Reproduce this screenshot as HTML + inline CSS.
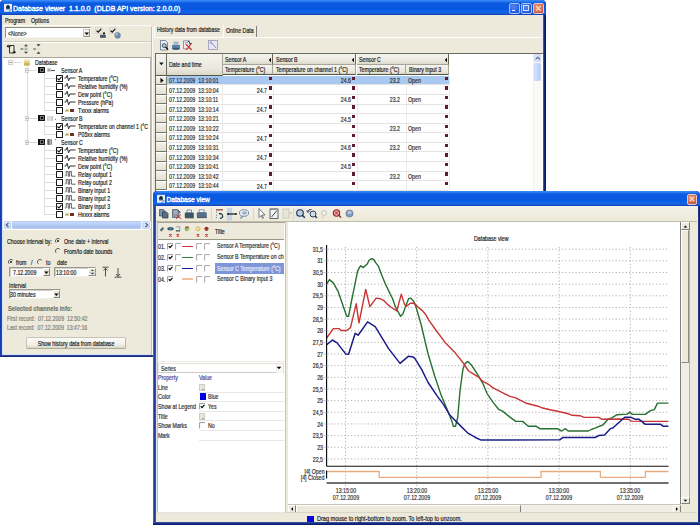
<!DOCTYPE html><html><head><meta charset="utf-8"><style>
html,body{margin:0;padding:0;}
body{width:700px;height:525px;overflow:hidden;position:relative;background:#fff;font-family:"Liberation Sans",sans-serif;}
div,span,svg{position:absolute;box-sizing:border-box;}
.t{font-size:7.2px;letter-spacing:0;line-height:8px;white-space:pre;color:#000;transform:scaleX(0.73);-webkit-text-stroke:0.2px currentColor;}
.tb{font-size:7px;font-weight:normal;letter-spacing:0;-webkit-text-stroke:0.35px #fff;line-height:8px;white-space:pre;color:#fff;}
</style></head><body>

<div style="left:0px;top:0px;width:546px;height:357px;background:linear-gradient(90deg,#0A38B8,#2848B0 1.5px,#2C4096 2.5px);border-radius:4px 4px 0 0;"></div>
<div style="left:0px;top:0px;width:546px;height:15px;background:linear-gradient(#3A8CFA 0,#2A78F0 1.5px,#0A5AE2 3px,#0858E0 9px,#1066F0 12px,#1A5CD0 13.5px,#0C3CB8 15px);border-radius:5px 5px 0 0;"></div>
<div style="left:542.2px;top:15px;width:1.1px;height:340px;background:#EEEAF8;"></div>
<div style="left:543.2px;top:15px;width:2.8px;height:342px;background:linear-gradient(90deg,#6070B0,#0C2878 45%,#0A1E62);"></div>
<div style="left:0px;top:355.2px;width:546px;height:2.0px;background:linear-gradient(#3A4CA0,#0C2272);"></div>
<div style="left:2px;top:15px;width:541px;height:340px;background:#EEEADB;border-left:1px solid #D8E0F6;border-bottom:1px solid #D8E0F6;border-right:1px solid #EEEAF8;"></div>
<svg style="left:2.5px;top:3px" width="10" height="10" viewBox="0 0 10 10"><rect x="1" y="0.8" width="8" height="8" fill="#E4EEFA"/><path d="M3 5.5 Q3 2 5 2 Q7 2 7 5.5 Z" fill="#1A2A3A"/><rect x="3.2" y="5.2" width="3.6" height="1.2" fill="#304050"/><path d="M6 8.8 L8.5 6" stroke="#3050A0" stroke-width="0.8"/></svg>
<span class="tb" style="left:13px;top:5.0px;transform-origin:0 50%;">Database viewer  1.1.0.0  (DLDB API version: 2.0.0.0)</span>
<div style="left:509px;top:3px;width:10.5px;height:10.8px;background:radial-gradient(circle at 40% 35%,#5A88F0,#2A5CD8 70%,#2050C8);border:0.8px solid #A8C0F4;border-radius:2px;"></div>
<div style="left:511.6px;top:9.6px;width:3.2px;height:1.4px;background:#E8F0FF;"></div>
<div style="left:521px;top:3px;width:10.5px;height:10.8px;background:radial-gradient(circle at 40% 35%,#5A88F0,#2A5CD8 70%,#2050C8);border:0.8px solid #A8C0F4;border-radius:2px;"></div>
<div style="left:523.3px;top:5.2px;width:5.9px;height:5.4px;border:0.8px solid #D8E4FF;border-top-width:1.6px;"></div>
<div style="left:533px;top:3px;width:10.5px;height:10.8px;background:radial-gradient(circle at 40% 35%,#E89880,#D06048 70%,#B84830);border:0.8px solid #E8C8C8;border-radius:2px;"></div>
<svg style="left:533px;top:3px" width="11" height="11" viewBox="0 0 11 11"><path d="M3 3 L7.8 7.8 M7.8 3 L3 7.8" stroke="#F8D0B8" stroke-width="1.5"/></svg>
<span class="t" style="left:5px;top:17.0px;transform-origin:0 50%;color:#202020;">Program</span>
<span class="t" style="left:31px;top:17.0px;transform-origin:0 50%;color:#202020;">Options</span>
<div style="left:2.5px;top:24.6px;width:148.1px;height:0.8px;background:#C8C4B4;"></div>
<div style="left:2.5px;top:25.4px;width:148.1px;height:0.8px;background:#FBFBF8;"></div>
<div style="left:5px;top:27.4px;width:86.4px;height:11.0px;background:#fff;border:1px solid #F4F4F0;border-top-color:#8C8C84;border-left-color:#8C8C84;"></div>
<span class="t" style="left:8px;top:29.6px;transform-origin:0 50%;color:#303030;">&lt;None&gt;</span>
<div style="left:82.5px;top:28.6px;width:7.9px;height:8.6px;background:linear-gradient(#FAFAF8,#E8E6DE);border:0.6px solid #C8C4B8;border-right-color:#909088;border-bottom-color:#909088;"></div>
<svg style="left:83px;top:30px" width="8" height="7" viewBox="0 0 8 7"><path d="M1.5 2.5 L6 2.5 L3.75 5 Z" fill="#000"/></svg>
<svg style="left:92px;top:25px" width="34" height="17" viewBox="0 0 34 17"><rect x="3.5" y="2.5" width="6.5" height="6" fill="#E8E6DE" stroke="#CCC8BC" stroke-width="0.5"/><path d="M4.6 5.6 L6.2 7.2 L9.2 3.8" stroke="#111" stroke-width="1.2" fill="none"/><circle cx="12" cy="8.4" r="1.1" fill="#111"/><rect x="8" y="9.8" width="5.8" height="3" fill="#4A5468"/><rect x="17.5" y="2.5" width="6.5" height="6" fill="#E8E6DE" stroke="#CCC8BC" stroke-width="0.5"/><path d="M18.6 5.6 L20.2 7.2 L23.2 3.8" stroke="#111" stroke-width="1.2" fill="none"/><circle cx="25.6" cy="10.4" r="3.1" fill="#6A88A8"/><circle cx="24.8" cy="9.4" r="1.2" fill="#A8C0D8"/></svg>
<div style="left:3px;top:41.2px;width:147.5px;height:0.8px;background:#D0CCBC;"></div>
<div style="left:3px;top:42px;width:147.5px;height:0.7px;background:#FAFAF6;"></div>
<svg style="left:6px;top:43px" width="40" height="13" viewBox="0 0 40 13"><path d="M3.5 2.5 h4.5 v7.5 h-4.5 z" stroke="#303030" stroke-width="1" fill="none"/><path d="M0.3 3.2 L2.6 1.6 V4.8 Z M10.2 9.2 L7.9 7.6 V10.8 Z" fill="#202020"/><path d="M2 3.2 h3 M6.5 9.2 h2" stroke="#202020" stroke-width="0.9"/><path d="M14.5 6 h2.8" stroke="#404040" stroke-width="1"/><circle cx="20" cy="6" r="1.8" fill="#A8C0B0"/><path d="M18 3.2 L20 1.2 L22 3.2 Z M18 8.8 L20 10.8 L22 8.8 Z" fill="#304040"/><path d="M27.3 6 h2.6" stroke="#404040" stroke-width="1"/><path d="M30.5 1.3 L32.5 3.5 L34.5 1.3 Z M30.5 10.7 L32.5 8.5 L34.5 10.7 Z" fill="#304040"/><circle cx="32.5" cy="6" r="1.2" fill="#D8E0D8"/></svg>
<div style="left:3px;top:56.6px;width:147.8px;height:173.8px;background:#fff;border-top:1px solid #A8A498;border-right:1.2px solid #B8B4A8;"></div>
<div style="left:26.5px;top:66px;width:1.0px;height:76.5px;border-left:1px solid #DCDCDC;"></div>
<div style="left:44.3px;top:74px;width:1.0px;height:36.5px;border-left:1px solid #DCDCDC;"></div>
<div style="left:44.3px;top:122px;width:1.0px;height:12.5px;border-left:1px solid #DCDCDC;"></div>
<div style="left:44.3px;top:146px;width:1.0px;height:68.5px;border-left:1px solid #DCDCDC;"></div>
<div style="left:7.8px;top:60.1px;width:4.8px;height:4.8px;border:0.8px solid #D0D0D0;background:#FAFAFA;"></div>
<div style="left:9px;top:62.2px;width:2.5px;height:0.8px;background:#A8A8A8;"></div>
<div style="left:12.6px;top:62.4px;width:9.4px;height:1.0px;border-top:1px solid #DCDCDC;"></div>
<svg style="left:22.5px;top:58.4px" width="8" height="9" viewBox="0 0 8 9"><rect x="1" y="2" width="5.8" height="5.5" rx="1" fill="#E4D080"/><ellipse cx="3.9" cy="2.2" rx="2.9" ry="1.1" fill="#F4ECC0"/><rect x="1" y="5.2" width="5.8" height="2.3" fill="#C8B060"/></svg>
<span class="t" style="left:35px;top:59.0px;transform-origin:0 50%;color:#202020;">Database</span>
<div style="left:24.7px;top:68.1px;width:4.5px;height:4.8px;border:0.8px solid #D0D0D0;background:#FAFAFA;"></div>
<div style="left:25.8px;top:70.2px;width:2.4px;height:0.8px;background:#A8A8A8;"></div>
<div style="left:29.2px;top:70.4px;width:8.3px;height:1.0px;border-top:1px solid #DCDCDC;"></div>
<div style="left:38.3px;top:67.1px;width:6.6px;height:6.4px;background:#141414;"></div>
<div style="left:39.5px;top:68.3px;width:4.2px;height:4.0px;background:#101010;border:0.7px solid #707070;"></div>
<div style="left:47.3px;top:67.9px;width:3.5px;height:4.5px;background:#A0A0A0;border:0.7px solid #D0D0D0;"></div>
<div style="left:51px;top:70.2px;width:4px;height:0.9px;background:#505050;"></div>
<span class="t" style="left:60.8px;top:67.0px;transform-origin:0 50%;color:#202020;">Sensor A</span>
<div style="left:45.3px;top:78.4px;width:10.7px;height:1.0px;border-top:1px solid #DCDCDC;"></div>
<div style="left:56px;top:75.3px;width:6.6px;height:6.4px;background:#fff;border:1.3px solid #1A1A1A;border-radius:0.6px;"></div>
<svg style="left:56.1px;top:75.4px" width="7" height="7" viewBox="0 0 7 7"><path d="M1.5 3.5 L3 5 L5.5 1.8" stroke="#111" stroke-width="1.1" fill="none"/></svg>
<svg style="left:63.5px;top:74.4px" width="13" height="8" viewBox="0 0 13 8"><path d="M0.5 4 L2 4 L3.2 1.3 L4.6 6.8 L5.8 4 L11.5 4" stroke="#1A1A1A" stroke-width="0.9" fill="none"/></svg>
<span class="t" style="left:78px;top:75.0px;transform-origin:0 50%;color:#202020;">Temperature (°C)</span>
<div style="left:45.3px;top:86.4px;width:10.7px;height:1.0px;border-top:1px solid #DCDCDC;"></div>
<div style="left:56px;top:83.3px;width:6.6px;height:6.4px;background:#fff;border:1.3px solid #1A1A1A;border-radius:0.6px;"></div>
<svg style="left:63.5px;top:82.4px" width="13" height="8" viewBox="0 0 13 8"><path d="M0.5 4 L2 4 L3.2 1.3 L4.6 6.8 L5.8 4 L11.5 4" stroke="#1A1A1A" stroke-width="0.9" fill="none"/></svg>
<span class="t" style="left:78px;top:83.0px;transform-origin:0 50%;color:#202020;">Relative humidity (%)</span>
<div style="left:45.3px;top:94.4px;width:10.7px;height:1.0px;border-top:1px solid #DCDCDC;"></div>
<div style="left:56px;top:91.3px;width:6.6px;height:6.4px;background:#fff;border:1.3px solid #1A1A1A;border-radius:0.6px;"></div>
<svg style="left:63.5px;top:90.4px" width="13" height="8" viewBox="0 0 13 8"><path d="M0.5 4 L2 4 L3.2 1.3 L4.6 6.8 L5.8 4 L11.5 4" stroke="#1A1A1A" stroke-width="0.9" fill="none"/></svg>
<span class="t" style="left:78px;top:91.0px;transform-origin:0 50%;color:#202020;">Dew point (°C)</span>
<div style="left:45.3px;top:102.4px;width:10.7px;height:1.0px;border-top:1px solid #DCDCDC;"></div>
<div style="left:56px;top:99.3px;width:6.6px;height:6.4px;background:#fff;border:1.3px solid #1A1A1A;border-radius:0.6px;"></div>
<svg style="left:63.5px;top:98.4px" width="13" height="8" viewBox="0 0 13 8"><path d="M0.5 4 L2 4 L3.2 1.3 L4.6 6.8 L5.8 4 L11.5 4" stroke="#1A1A1A" stroke-width="0.9" fill="none"/></svg>
<span class="t" style="left:78px;top:99.0px;transform-origin:0 50%;color:#202020;">Pressure (hPa)</span>
<div style="left:45.3px;top:110.4px;width:10.7px;height:1.0px;border-top:1px solid #DCDCDC;"></div>
<div style="left:56px;top:107.3px;width:6.6px;height:6.4px;background:#fff;border:1.3px solid #1A1A1A;border-radius:0.6px;"></div>
<div style="left:64.5px;top:108.6px;width:4.0px;height:3.6px;background:#98A050;border:0.6px solid #D8D8A0;"></div>
<div style="left:70.2px;top:108.6px;width:3.8px;height:3.6px;background:#703028;"></div>
<span class="t" style="left:78px;top:107.0px;transform-origin:0 50%;color:#202020;">Txxxx alarms</span>
<div style="left:24.7px;top:116.1px;width:4.5px;height:4.8px;border:0.8px solid #D0D0D0;background:#FAFAFA;"></div>
<div style="left:25.8px;top:118.2px;width:2.4px;height:0.8px;background:#A8A8A8;"></div>
<div style="left:29.2px;top:118.4px;width:8.3px;height:1.0px;border-top:1px solid #DCDCDC;"></div>
<div style="left:38.3px;top:115.1px;width:6.6px;height:6.4px;background:#141414;"></div>
<div style="left:39.5px;top:116.3px;width:4.2px;height:4.0px;background:#101010;border:0.7px solid #707070;"></div>
<div style="left:47.3px;top:115.9px;width:6.2px;height:5.3px;background:linear-gradient(90deg,#C8C8C8,#E8E8E8,#B8B8B8);border-radius:1px;"></div>
<div style="left:55px;top:118.9px;width:1px;height:0.8px;background:#808080;"></div>
<span class="t" style="left:60.8px;top:115.0px;transform-origin:0 50%;color:#202020;">Sensor B</span>
<div style="left:45.3px;top:126.4px;width:10.7px;height:1.0px;border-top:1px solid #DCDCDC;"></div>
<div style="left:56px;top:123.3px;width:6.6px;height:6.4px;background:#fff;border:1.3px solid #1A1A1A;border-radius:0.6px;"></div>
<svg style="left:56.1px;top:123.4px" width="7" height="7" viewBox="0 0 7 7"><path d="M1.5 3.5 L3 5 L5.5 1.8" stroke="#111" stroke-width="1.1" fill="none"/></svg>
<svg style="left:63.5px;top:122.4px" width="13" height="8" viewBox="0 0 13 8"><path d="M0.5 4 L2 4 L3.2 1.3 L4.6 6.8 L5.8 4 L11.5 4" stroke="#1A1A1A" stroke-width="0.9" fill="none"/></svg>
<span class="t" style="left:78px;top:123.0px;transform-origin:0 50%;color:#202020;">Temperature on channel 1 (°C</span>
<div style="left:45.3px;top:134.4px;width:10.7px;height:1.0px;border-top:1px solid #DCDCDC;"></div>
<div style="left:56px;top:131.3px;width:6.6px;height:6.4px;background:#fff;border:1.3px solid #1A1A1A;border-radius:0.6px;"></div>
<div style="left:64.5px;top:132.6px;width:4.0px;height:3.6px;background:#98A050;border:0.6px solid #D8D8A0;"></div>
<div style="left:70.2px;top:132.6px;width:3.8px;height:3.6px;background:#703028;"></div>
<span class="t" style="left:78px;top:131.0px;transform-origin:0 50%;color:#202020;">P05xx alarms</span>
<div style="left:24.7px;top:140.1px;width:4.5px;height:4.8px;border:0.8px solid #D0D0D0;background:#FAFAFA;"></div>
<div style="left:25.8px;top:142.2px;width:2.4px;height:0.8px;background:#A8A8A8;"></div>
<div style="left:29.2px;top:142.4px;width:8.3px;height:1.0px;border-top:1px solid #DCDCDC;"></div>
<div style="left:38.3px;top:139.1px;width:6.6px;height:6.4px;background:#141414;"></div>
<div style="left:39.5px;top:140.3px;width:4.2px;height:4.0px;background:#101010;border:0.7px solid #707070;"></div>
<div style="left:47.3px;top:139.4px;width:4.7px;height:6.0px;background:linear-gradient(90deg,#A0A0A0,#606060,#C0C0C0,#707070);border-radius:1px;"></div>
<div style="left:54.5px;top:139.4px;width:0.8px;height:0.8px;background:#808080;"></div>
<span class="t" style="left:60.8px;top:139.0px;transform-origin:0 50%;color:#202020;">Sensor C</span>
<div style="left:45.3px;top:150.4px;width:10.7px;height:1.0px;border-top:1px solid #DCDCDC;"></div>
<div style="left:56px;top:147.3px;width:6.6px;height:6.4px;background:#fff;border:1.3px solid #1A1A1A;border-radius:0.6px;"></div>
<svg style="left:56.1px;top:147.4px" width="7" height="7" viewBox="0 0 7 7"><path d="M1.5 3.5 L3 5 L5.5 1.8" stroke="#111" stroke-width="1.1" fill="none"/></svg>
<svg style="left:63.5px;top:146.4px" width="13" height="8" viewBox="0 0 13 8"><path d="M0.5 4 L2 4 L3.2 1.3 L4.6 6.8 L5.8 4 L11.5 4" stroke="#1A1A1A" stroke-width="0.9" fill="none"/></svg>
<span class="t" style="left:78px;top:147.0px;transform-origin:0 50%;color:#202020;">Temperature (°C)</span>
<div style="left:45.3px;top:158.4px;width:10.7px;height:1.0px;border-top:1px solid #DCDCDC;"></div>
<div style="left:56px;top:155.3px;width:6.6px;height:6.4px;background:#fff;border:1.3px solid #1A1A1A;border-radius:0.6px;"></div>
<svg style="left:63.5px;top:154.4px" width="13" height="8" viewBox="0 0 13 8"><path d="M0.5 4 L2 4 L3.2 1.3 L4.6 6.8 L5.8 4 L11.5 4" stroke="#1A1A1A" stroke-width="0.9" fill="none"/></svg>
<span class="t" style="left:78px;top:155.0px;transform-origin:0 50%;color:#202020;">Relative humidity (%)</span>
<div style="left:45.3px;top:166.4px;width:10.7px;height:1.0px;border-top:1px solid #DCDCDC;"></div>
<div style="left:56px;top:163.3px;width:6.6px;height:6.4px;background:#fff;border:1.3px solid #1A1A1A;border-radius:0.6px;"></div>
<svg style="left:63.5px;top:162.4px" width="13" height="8" viewBox="0 0 13 8"><path d="M0.5 4 L2 4 L3.2 1.3 L4.6 6.8 L5.8 4 L11.5 4" stroke="#1A1A1A" stroke-width="0.9" fill="none"/></svg>
<span class="t" style="left:78px;top:163.0px;transform-origin:0 50%;color:#202020;">Dew point (°C)</span>
<div style="left:45.3px;top:174.4px;width:10.7px;height:1.0px;border-top:1px solid #DCDCDC;"></div>
<div style="left:56px;top:171.3px;width:6.6px;height:6.4px;background:#fff;border:1.3px solid #1A1A1A;border-radius:0.6px;"></div>
<svg style="left:63.5px;top:170.4px" width="13" height="8" viewBox="0 0 13 8"><path d="M0.8 5.5 Q1.8 6.8 2.2 5.5 L2.2 1.5 L4.2 1.5 L4.2 6.2 L5.6 6.2 L5.6 1.5 L7.4 1.5 L7.4 6.2 L11.5 6.2" stroke="#303030" stroke-width="0.75" fill="none"/></svg>
<span class="t" style="left:78px;top:171.0px;transform-origin:0 50%;color:#202020;">Relay output 1</span>
<div style="left:45.3px;top:182.4px;width:10.7px;height:1.0px;border-top:1px solid #DCDCDC;"></div>
<div style="left:56px;top:179.3px;width:6.6px;height:6.4px;background:#fff;border:1.3px solid #1A1A1A;border-radius:0.6px;"></div>
<svg style="left:63.5px;top:178.4px" width="13" height="8" viewBox="0 0 13 8"><path d="M0.8 5.5 Q1.8 6.8 2.2 5.5 L2.2 1.5 L4.2 1.5 L4.2 6.2 L5.6 6.2 L5.6 1.5 L7.4 1.5 L7.4 6.2 L11.5 6.2" stroke="#303030" stroke-width="0.75" fill="none"/></svg>
<span class="t" style="left:78px;top:179.0px;transform-origin:0 50%;color:#202020;">Relay output 2</span>
<div style="left:45.3px;top:190.4px;width:10.7px;height:1.0px;border-top:1px solid #DCDCDC;"></div>
<div style="left:56px;top:187.3px;width:6.6px;height:6.4px;background:#fff;border:1.3px solid #1A1A1A;border-radius:0.6px;"></div>
<svg style="left:63.5px;top:186.4px" width="13" height="8" viewBox="0 0 13 8"><path d="M0.8 5.5 Q1.8 6.8 2.2 5.5 L2.2 1.5 L4.2 1.5 L4.2 6.2 L5.6 6.2 L5.6 1.5 L7.4 1.5 L7.4 6.2 L11.5 6.2" stroke="#303030" stroke-width="0.75" fill="none"/></svg>
<span class="t" style="left:78px;top:187.0px;transform-origin:0 50%;color:#202020;">Binary input 1</span>
<div style="left:45.3px;top:198.4px;width:10.7px;height:1.0px;border-top:1px solid #DCDCDC;"></div>
<div style="left:56px;top:195.3px;width:6.6px;height:6.4px;background:#fff;border:1.3px solid #1A1A1A;border-radius:0.6px;"></div>
<svg style="left:63.5px;top:194.4px" width="13" height="8" viewBox="0 0 13 8"><path d="M0.8 5.5 Q1.8 6.8 2.2 5.5 L2.2 1.5 L4.2 1.5 L4.2 6.2 L5.6 6.2 L5.6 1.5 L7.4 1.5 L7.4 6.2 L11.5 6.2" stroke="#303030" stroke-width="0.75" fill="none"/></svg>
<span class="t" style="left:78px;top:195.0px;transform-origin:0 50%;color:#202020;">Binary input 2</span>
<div style="left:45.3px;top:206.4px;width:10.7px;height:1.0px;border-top:1px solid #DCDCDC;"></div>
<div style="left:56px;top:203.3px;width:6.6px;height:6.4px;background:#fff;border:1.3px solid #1A1A1A;border-radius:0.6px;"></div>
<svg style="left:56.1px;top:203.4px" width="7" height="7" viewBox="0 0 7 7"><path d="M1.5 3.5 L3 5 L5.5 1.8" stroke="#111" stroke-width="1.1" fill="none"/></svg>
<svg style="left:63.5px;top:202.4px" width="13" height="8" viewBox="0 0 13 8"><path d="M0.8 5.5 Q1.8 6.8 2.2 5.5 L2.2 1.5 L4.2 1.5 L4.2 6.2 L5.6 6.2 L5.6 1.5 L7.4 1.5 L7.4 6.2 L11.5 6.2" stroke="#303030" stroke-width="0.75" fill="none"/></svg>
<span class="t" style="left:78px;top:203.0px;transform-origin:0 50%;color:#202020;">Binary input 3</span>
<div style="left:45.3px;top:214.4px;width:10.7px;height:1.0px;border-top:1px solid #DCDCDC;"></div>
<div style="left:56px;top:211.3px;width:6.6px;height:6.4px;background:#fff;border:1.3px solid #1A1A1A;border-radius:0.6px;"></div>
<div style="left:64.5px;top:212.6px;width:4.0px;height:3.6px;background:#98A050;border:0.6px solid #D8D8A0;"></div>
<div style="left:70.2px;top:212.6px;width:3.8px;height:3.6px;background:#703028;"></div>
<span class="t" style="left:78px;top:211.0px;transform-origin:0 50%;color:#202020;">Hxxxx alarms</span>
<div style="left:3px;top:220.6px;width:147.6px;height:8.6px;background:#F4F4F0;"></div>
<div style="left:3.5px;top:220.8px;width:7.8px;height:8.2px;background:linear-gradient(#DCE8FC,#C4D8F8);border:0.6px solid #C8D8F0;border-radius:1px;"></div>
<svg style="left:4px;top:221px" width="7" height="8" viewBox="0 0 7 8"><path d="M4.5 1.8 L2.3 4 L4.5 6.2" stroke="#4D6185" stroke-width="1.2" fill="none"/></svg>
<div style="left:12px;top:220.8px;width:128.5px;height:8.2px;background:linear-gradient(#C8DAFC,#B0C8F4 60%,#A8C0F0);border:0.6px solid #B8CCF0;border-radius:1px;"></div>
<div style="left:141.5px;top:220.8px;width:8.8px;height:8.2px;background:linear-gradient(#DCE8FC,#C4D8F8);border:0.6px solid #C8D8F0;border-radius:1px;"></div>
<svg style="left:142.5px;top:221px" width="7" height="8" viewBox="0 0 7 8"><path d="M2.5 1.8 L4.7 4 L2.5 6.2" stroke="#4D6185" stroke-width="1.2" fill="none"/></svg>
<span class="t" style="left:6.9px;top:237.8px;transform-origin:0 50%;color:#202020;">Choose interval by:</span>
<svg style="left:55.0px;top:238.3px" width="6" height="6" viewBox="0 0 6 6"><path d="M4.8 1.2 A2.5 2.5 0 0 0 1.2 4.8" stroke="#505050" stroke-width="0.9" fill="none"/><circle cx="3" cy="3" r="0.9" fill="#000"/></svg>
<span class="t" style="left:64.2px;top:237.9px;transform-origin:0 50%;color:#202020;">One date + interval</span>
<svg style="left:55.0px;top:247.9px" width="6" height="6" viewBox="0 0 6 6"><path d="M4.8 1.2 A2.5 2.5 0 0 0 1.2 4.8" stroke="#505050" stroke-width="0.9" fill="none"/></svg>
<span class="t" style="left:64.2px;top:247.5px;transform-origin:0 50%;color:#202020;">From/to date bounds</span>
<svg style="left:7.5px;top:259.4px" width="6" height="6" viewBox="0 0 6 6"><path d="M4.8 1.2 A2.5 2.5 0 0 0 1.2 4.8" stroke="#505050" stroke-width="0.9" fill="none"/><circle cx="3" cy="3" r="0.9" fill="#000"/></svg>
<span class="t" style="left:16px;top:259.0px;transform-origin:0 50%;color:#202020;">from</span>
<span class="t" style="left:30.8px;top:259.0px;transform-origin:0 50%;color:#202020;">/</span>
<svg style="left:37.2px;top:259.4px" width="6" height="6" viewBox="0 0 6 6"><path d="M4.8 1.2 A2.5 2.5 0 0 0 1.2 4.8" stroke="#505050" stroke-width="0.9" fill="none"/></svg>
<span class="t" style="left:45.7px;top:259.0px;transform-origin:0 50%;color:#202020;">to</span>
<span class="t" style="left:57px;top:259.0px;transform-origin:0 50%;color:#202020;">date</span>
<div style="left:8.6px;top:267px;width:42.3px;height:9.7px;background:#fff;border:1.3px solid #9A9A90;border-right-color:#F0F0EA;border-bottom-color:#F0F0EA;box-shadow:inset 0.8px 0.8px 0 #C4C4BC;"></div>
<span class="t" style="left:12.5px;top:268.5px;transform-origin:0 50%;color:#202020;">7.12.2009</span>
<div style="left:42.8px;top:268px;width:7.2px;height:7.8px;background:#ECE9D8;border:0.7px solid #fff;border-right-color:#808080;border-bottom-color:#808080;"></div>
<svg style="left:43px;top:268.5px" width="7" height="7" viewBox="0 0 7 7"><path d="M1.2 2.5 L5.6 2.5 L3.4 5 Z" fill="#000"/></svg>
<div style="left:53.5px;top:267px;width:42.9px;height:9.7px;background:#fff;border:1.3px solid #9A9A90;border-right-color:#F0F0EA;border-bottom-color:#F0F0EA;box-shadow:inset 0.8px 0.8px 0 #C4C4BC;"></div>
<span class="t" style="left:55.5px;top:268.5px;transform-origin:0 50%;color:#202020;">13:10:00</span>
<div style="left:88.3px;top:268px;width:7.3px;height:7.8px;background:#ECE9D8;border:0.6px solid #fff;border-right-color:#909090;border-bottom-color:#909090;"></div>
<div style="left:88.5px;top:271.7px;width:7.0px;height:0.6px;background:#C0C0C0;"></div>
<svg style="left:88.5px;top:268px" width="7" height="8" viewBox="0 0 7 8"><path d="M2 3 L3.5 1.5 L5 3 Z M2 5 L3.5 6.5 L5 5 Z" fill="#303030"/></svg>
<svg style="left:101px;top:266px" width="22" height="13" viewBox="0 0 22 13"><path d="M1.5 1.2 H7.5" stroke="#404040" stroke-width="0.9"/><path d="M4.5 2 V10.5 M2.5 4.5 L4.5 2.2 L6.5 4.5" stroke="#404040" stroke-width="0.9" fill="none"/><path d="M13.5 11.2 H20.5" stroke="#404040" stroke-width="0.9"/><path d="M17 2 V10.5 M15 8 L17 10.3 L19 8" stroke="#404040" stroke-width="0.9" fill="none"/></svg>
<span class="t" style="left:8.5px;top:281.9px;transform-origin:0 50%;color:#202020;">Interval</span>
<div style="left:8.5px;top:289.3px;width:52.1px;height:9.7px;background:#fff;border:1.3px solid #9A9A90;border-right-color:#F0F0EA;border-bottom-color:#F0F0EA;box-shadow:inset 0.8px 0.8px 0 #C4C4BC;"></div>
<span class="t" style="left:10.2px;top:290.8px;transform-origin:0 50%;color:#202020;">30 minutes</span>
<div style="left:52.5px;top:290.3px;width:7.2px;height:7.8px;background:#ECE9D8;border:0.7px solid #fff;border-right-color:#808080;border-bottom-color:#808080;"></div>
<svg style="left:52.7px;top:290.8px" width="7" height="7" viewBox="0 0 7 7"><path d="M1.2 2.5 L5.6 2.5 L3.4 5 Z" fill="#000"/></svg>
<span class="t" style="left:7.5px;top:304.6px;transform-origin:0 50%;color:#76766A;font-weight:bold;transform:scaleX(0.8);">Selected channels info:</span>
<span class="t" style="left:7px;top:314.8px;transform-origin:0 50%;color:#828276;">First record:  07.12.2009  12:50:42</span>
<span class="t" style="left:7px;top:324.2px;transform-origin:0 50%;color:#828276;">Last record:  07.12.2009  13:47:16</span>
<div style="left:26px;top:336.9px;width:99.5px;height:12.1px;background:linear-gradient(#FCFCFA,#F0EEE6 70%,#D8D4C4);border:0.8px solid #C8C4B8;border-bottom:1.5px solid #B0AC9C;border-right:1.2px solid #B8B4A8;border-radius:1.5px;"></div>
<span class="t" style="left:-24.3px;width:200px;text-align:center;top:339.5px;transform-origin:50% 50%;color:#202020;">Show history data from database</span>
<div style="left:150.7px;top:230.4px;width:1.1px;height:124.6px;background:#E0DCD0;"></div>
<div style="left:150.7px;top:27.2px;width:1.0px;height:327.8px;background:#C4C0B0;"></div>
<div style="left:152.2px;top:27.2px;width:0.8px;height:327.8px;background:#FAFAF6;"></div>
<div style="left:153.5px;top:25.5px;width:69.5px;height:11.9px;border-left:0.8px solid #FFFFFF;"></div>
<span class="t" style="left:157px;top:26.1px;transform-origin:0 50%;color:#202020;">History data from database</span>
<div style="left:222.6px;top:25px;width:1.0px;height:11.5px;background:#808080;border-right:0.6px solid #fff;"></div>
<span class="t" style="left:226px;top:27.2px;transform-origin:0 50%;color:#202020;">Online Data</span>
<div style="left:256px;top:25.5px;width:1px;height:11.0px;background:#808080;"></div>
<div style="left:153.5px;top:36.6px;width:388.5px;height:0.8px;background:#C0BCB0;"></div>
<div style="left:153.5px;top:37.4px;width:388.5px;height:0.8px;background:#FFFFFF;"></div>
<svg style="left:159px;top:39.5px" width="62" height="11" viewBox="0 0 62 11"><path d="M1.5 0.5 h5 l2 2 v7.5 h-7 z" fill="#E8ECF4" stroke="#607088" stroke-width="0.8"/><circle cx="5.2" cy="5.6" r="2" fill="#A8C0D8" stroke="#304050" stroke-width="0.8"/><path d="M6.6 7 L9 9.6" stroke="#000" stroke-width="1.2"/><path d="M14.5 5 h5 v-3.5 h-5 z" fill="#A8B8D0"/><path d="M13 5 h8 v3.5 h-8 z" rx="1" fill="#5A80A8"/><ellipse cx="17" cy="8.8" rx="4" ry="1.1" fill="#3A5878"/><path d="M24.5 0.8 h6 v8 h-6 z" fill="#E8ECF4" stroke="#708090" stroke-width="0.8"/><path d="M26 2.5 h3 M26 4 h3" stroke="#8090A0" stroke-width="0.6"/><path d="M27 10 L33 3 M27 4.5 L33 10" stroke="#E03030" stroke-width="1.1"/><path d="M29 1 l3 3" stroke="#304050" stroke-width="1"/><rect x="49.5" y="0.5" width="9" height="9" fill="#E8E8F4" stroke="#9898B8" stroke-width="0.8"/><path d="M51 3 q3 0 6 5" stroke="#7078A0" stroke-width="0.8" fill="none"/><path d="M51 2 h2" stroke="#7078A0" stroke-width="0.8"/></svg>
<div style="left:155.1px;top:53px;width:387.9px;height:302px;background:#fff;border-top:1px solid #6A6A60;border-left:1px solid #6A6A60;"></div>
<div style="left:156.1px;top:54px;width:10.9px;height:21.5px;background:linear-gradient(#F4F3EE,#EAE8DE 70%,#DCD8CA);border-right:1px solid #686858;border-bottom:1.2px solid #505848;"></div>
<svg style="left:158px;top:61px" width="7" height="6" viewBox="0 0 7 6"><path d="M1.2 1.6 L5.6 1.6 L3.4 4.2 Z" fill="#101010"/></svg>
<div style="left:167px;top:54px;width:55.6px;height:21.5px;background:linear-gradient(#F4F3EE,#EAE8DE 70%,#DCD8CA);border-right:1px solid #A8A498;border-bottom:1.2px solid #505848;"></div>
<span class="t" style="left:168.6px;top:61.4px;transform-origin:0 50%;color:#202020;">Date and time</span>
<div style="left:222.6px;top:54px;width:50.6px;height:10.6px;background:linear-gradient(#F4F3EE,#EAE8DE 70%,#DCD8CA);border-right:1.2px solid #686858;border-bottom:1px solid #A8A498;"></div>
<span class="t" style="left:225.1px;top:55.9px;transform-origin:0 50%;color:#202020;">Sensor A</span>
<svg style="left:267.7px;top:56.5px" width="4" height="6" viewBox="0 0 4 6"><path d="M3 0.8 L0.8 3 L3 5.2 Z" fill="#000"/></svg>
<div style="left:273.2px;top:54px;width:83.3px;height:10.6px;background:linear-gradient(#F4F3EE,#EAE8DE 70%,#DCD8CA);border-right:1.2px solid #686858;border-bottom:1px solid #A8A498;"></div>
<span class="t" style="left:275.7px;top:55.9px;transform-origin:0 50%;color:#202020;">Sensor B</span>
<svg style="left:351.0px;top:56.5px" width="4" height="6" viewBox="0 0 4 6"><path d="M3 0.8 L0.8 3 L3 5.2 Z" fill="#000"/></svg>
<div style="left:356.5px;top:54px;width:92.8px;height:10.6px;background:linear-gradient(#F4F3EE,#EAE8DE 70%,#DCD8CA);border-right:1.2px solid #686858;border-bottom:1px solid #A8A498;"></div>
<span class="t" style="left:359.0px;top:55.9px;transform-origin:0 50%;color:#202020;">Sensor C</span>
<svg style="left:443.8px;top:56.5px" width="4" height="6" viewBox="0 0 4 6"><path d="M3 0.8 L0.8 3 L3 5.2 Z" fill="#000"/></svg>
<div style="left:222.6px;top:64.6px;width:50.6px;height:10.9px;background:linear-gradient(#F4F3EE,#EAE8DE 70%,#DCD8CA);border-right:1px solid #A8A498;border-bottom:1.2px solid #505848;overflow:hidden;"></div>
<div style="left:222.6px;top:64.6px;width:49.099999999999994px;height:10px;overflow:hidden;"><span class="t" style="left:2.5px;top:1.2px;color:#202020;transform-origin:0 50%;">Temperature (°C)</span></div>
<div style="left:273.2px;top:64.6px;width:83.3px;height:10.9px;background:linear-gradient(#F4F3EE,#EAE8DE 70%,#DCD8CA);border-right:1px solid #A8A498;border-bottom:1.2px solid #505848;overflow:hidden;"></div>
<div style="left:273.2px;top:64.6px;width:81.80000000000001px;height:10px;overflow:hidden;"><span class="t" style="left:2.5px;top:1.2px;color:#202020;transform-origin:0 50%;">Temperature on channel 1 (°C)</span></div>
<div style="left:356.5px;top:64.6px;width:49.8px;height:10.9px;background:linear-gradient(#F4F3EE,#EAE8DE 70%,#DCD8CA);border-right:1px solid #A8A498;border-bottom:1.2px solid #505848;overflow:hidden;"></div>
<div style="left:356.5px;top:64.6px;width:48.30000000000001px;height:10px;overflow:hidden;"><span class="t" style="left:2.5px;top:1.2px;color:#202020;transform-origin:0 50%;">Temperature (°C)</span></div>
<div style="left:406.3px;top:64.6px;width:43.0px;height:10.9px;background:linear-gradient(#F4F3EE,#EAE8DE 70%,#DCD8CA);border-right:1px solid #A8A498;border-bottom:1.2px solid #505848;overflow:hidden;"></div>
<div style="left:406.3px;top:64.6px;width:41.5px;height:10px;overflow:hidden;"><span class="t" style="left:2.5px;top:1.2px;color:#202020;transform-origin:0 50%;">Binary input 3</span></div>
<div style="left:222.3px;top:75.5px;width:0.8px;height:114.84px;background:#EEEAEA;"></div>
<div style="left:273.2px;top:75.5px;width:0.8px;height:114.84px;background:#EEEAEA;"></div>
<div style="left:356.5px;top:75.5px;width:0.8px;height:114.84px;background:#EEEAEA;"></div>
<div style="left:406.3px;top:75.5px;width:0.8px;height:114.84px;background:#EEEAEA;"></div>
<div style="left:449.3px;top:75.5px;width:0.8px;height:114.84px;background:#EEEAEA;"></div>
<div style="left:156.1px;top:75.5px;width:10.9px;height:9.57px;background:linear-gradient(#F2F0E8,#E4E0D4);border-right:1px solid #808070;border-bottom:1px solid #787868;border-top:0.6px solid #fff;"></div>
<svg style="left:158.5px;top:77.0px" width="6" height="7" viewBox="0 0 6 7"><path d="M1.5 0.8 L4.6 3.4 L1.5 6 Z" fill="#000"/></svg>
<div style="left:167px;top:75.8px;width:282.3px;height:9.07px;background:#A9C8F0;"></div>
<div style="left:167px;top:84.47px;width:282.3px;height:0.8px;background:#E4E4E4;"></div>
<span class="t" style="left:168.9px;top:77.0px;transform-origin:0 50%;color:#303030;color:#203050;">07.12.2009  13:10:01</span>
<span class="t" style="right:349.5px;top:77.3px;transform-origin:100% 50%;color:#303030;">24.6</span>
<span class="t" style="right:300.1px;top:77.3px;transform-origin:100% 50%;color:#303030;">23.2</span>
<span class="t" style="left:408px;top:77.3px;transform-origin:0 50%;color:#303030;">Open</span>
<div style="left:268.9px;top:76.7px;width:3.2px;height:3.3px;background:#5E1C2C;"></div>
<div style="left:352.2px;top:76.7px;width:3.2px;height:3.3px;background:#5E1C2C;"></div>
<div style="left:445.3px;top:76.7px;width:3.2px;height:3.3px;background:#5E1C2C;"></div>
<div style="left:156.1px;top:85.07px;width:10.9px;height:9.57px;background:linear-gradient(#F2F0E8,#E4E0D4);border-right:1px solid #808070;border-bottom:1px solid #787868;border-top:0.6px solid #fff;"></div>
<div style="left:167px;top:94.04px;width:282.3px;height:0.8px;background:#E4E4E4;"></div>
<span class="t" style="left:168.9px;top:86.57px;transform-origin:0 50%;color:#303030;">07.12.2009  13:10:04</span>
<span class="t" style="right:433.4px;top:86.87px;transform-origin:100% 50%;color:#303030;">24.7</span>
<div style="left:268.9px;top:86.27px;width:3.2px;height:3.3px;background:#5E1C2C;"></div>
<div style="left:352.2px;top:86.27px;width:3.2px;height:3.3px;background:#5E1C2C;"></div>
<div style="left:445.3px;top:86.27px;width:3.2px;height:3.3px;background:#5E1C2C;"></div>
<div style="left:156.1px;top:94.64px;width:10.9px;height:9.57px;background:linear-gradient(#F2F0E8,#E4E0D4);border-right:1px solid #808070;border-bottom:1px solid #787868;border-top:0.6px solid #fff;"></div>
<div style="left:167px;top:103.61px;width:282.3px;height:0.8px;background:#E4E4E4;"></div>
<span class="t" style="left:168.9px;top:96.14px;transform-origin:0 50%;color:#303030;">07.12.2009  13:10:11</span>
<span class="t" style="right:349.5px;top:96.44px;transform-origin:100% 50%;color:#303030;">24.6</span>
<span class="t" style="right:300.1px;top:96.44px;transform-origin:100% 50%;color:#303030;">23.2</span>
<span class="t" style="left:408px;top:96.44px;transform-origin:0 50%;color:#303030;">Open</span>
<div style="left:268.9px;top:95.84px;width:3.2px;height:3.3px;background:#5E1C2C;"></div>
<div style="left:352.2px;top:95.84px;width:3.2px;height:3.3px;background:#5E1C2C;"></div>
<div style="left:445.3px;top:95.84px;width:3.2px;height:3.3px;background:#5E1C2C;"></div>
<div style="left:156.1px;top:104.21px;width:10.9px;height:9.57px;background:linear-gradient(#F2F0E8,#E4E0D4);border-right:1px solid #808070;border-bottom:1px solid #787868;border-top:0.6px solid #fff;"></div>
<div style="left:167px;top:113.18px;width:282.3px;height:0.8px;background:#E4E4E4;"></div>
<span class="t" style="left:168.9px;top:105.71px;transform-origin:0 50%;color:#303030;">07.12.2009  13:10:14</span>
<span class="t" style="right:433.4px;top:106.01px;transform-origin:100% 50%;color:#303030;">24.7</span>
<div style="left:268.9px;top:105.41px;width:3.2px;height:3.3px;background:#5E1C2C;"></div>
<div style="left:352.2px;top:105.41px;width:3.2px;height:3.3px;background:#5E1C2C;"></div>
<div style="left:445.3px;top:105.41px;width:3.2px;height:3.3px;background:#5E1C2C;"></div>
<div style="left:156.1px;top:113.78px;width:10.9px;height:9.57px;background:linear-gradient(#F2F0E8,#E4E0D4);border-right:1px solid #808070;border-bottom:1px solid #787868;border-top:0.6px solid #fff;"></div>
<div style="left:167px;top:122.75px;width:282.3px;height:0.8px;background:#E4E4E4;"></div>
<span class="t" style="left:168.9px;top:115.28px;transform-origin:0 50%;color:#303030;">07.12.2009  13:10:21</span>
<span class="t" style="right:349.5px;top:115.58px;transform-origin:100% 50%;color:#303030;">24.5</span>
<div style="left:268.9px;top:114.98px;width:3.2px;height:3.3px;background:#5E1C2C;"></div>
<div style="left:352.2px;top:114.98px;width:3.2px;height:3.3px;background:#5E1C2C;"></div>
<div style="left:445.3px;top:114.98px;width:3.2px;height:3.3px;background:#5E1C2C;"></div>
<div style="left:156.1px;top:123.35px;width:10.9px;height:9.57px;background:linear-gradient(#F2F0E8,#E4E0D4);border-right:1px solid #808070;border-bottom:1px solid #787868;border-top:0.6px solid #fff;"></div>
<div style="left:167px;top:132.32px;width:282.3px;height:0.8px;background:#E4E4E4;"></div>
<span class="t" style="left:168.9px;top:124.85px;transform-origin:0 50%;color:#303030;">07.12.2009  13:10:22</span>
<span class="t" style="right:300.1px;top:125.15px;transform-origin:100% 50%;color:#303030;">23.2</span>
<span class="t" style="left:408px;top:125.15px;transform-origin:0 50%;color:#303030;">Open</span>
<div style="left:268.9px;top:124.55px;width:3.2px;height:3.3px;background:#5E1C2C;"></div>
<div style="left:352.2px;top:124.55px;width:3.2px;height:3.3px;background:#5E1C2C;"></div>
<div style="left:445.3px;top:124.55px;width:3.2px;height:3.3px;background:#5E1C2C;"></div>
<div style="left:156.1px;top:132.92px;width:10.9px;height:9.57px;background:linear-gradient(#F2F0E8,#E4E0D4);border-right:1px solid #808070;border-bottom:1px solid #787868;border-top:0.6px solid #fff;"></div>
<div style="left:167px;top:141.89px;width:282.3px;height:0.8px;background:#E4E4E4;"></div>
<span class="t" style="left:168.9px;top:134.42px;transform-origin:0 50%;color:#303030;">07.12.2009  13:10:24</span>
<span class="t" style="right:433.4px;top:134.72px;transform-origin:100% 50%;color:#303030;">24.7</span>
<div style="left:268.9px;top:134.12px;width:3.2px;height:3.3px;background:#5E1C2C;"></div>
<div style="left:352.2px;top:134.12px;width:3.2px;height:3.3px;background:#5E1C2C;"></div>
<div style="left:445.3px;top:134.12px;width:3.2px;height:3.3px;background:#5E1C2C;"></div>
<div style="left:156.1px;top:142.49px;width:10.9px;height:9.57px;background:linear-gradient(#F2F0E8,#E4E0D4);border-right:1px solid #808070;border-bottom:1px solid #787868;border-top:0.6px solid #fff;"></div>
<div style="left:167px;top:151.46px;width:282.3px;height:0.8px;background:#E4E4E4;"></div>
<span class="t" style="left:168.9px;top:143.99px;transform-origin:0 50%;color:#303030;">07.12.2009  13:10:31</span>
<span class="t" style="right:349.5px;top:144.29px;transform-origin:100% 50%;color:#303030;">24.6</span>
<span class="t" style="right:300.1px;top:144.29px;transform-origin:100% 50%;color:#303030;">23.2</span>
<span class="t" style="left:408px;top:144.29px;transform-origin:0 50%;color:#303030;">Open</span>
<div style="left:268.9px;top:143.69px;width:3.2px;height:3.3px;background:#5E1C2C;"></div>
<div style="left:352.2px;top:143.69px;width:3.2px;height:3.3px;background:#5E1C2C;"></div>
<div style="left:445.3px;top:143.69px;width:3.2px;height:3.3px;background:#5E1C2C;"></div>
<div style="left:156.1px;top:152.06px;width:10.9px;height:9.57px;background:linear-gradient(#F2F0E8,#E4E0D4);border-right:1px solid #808070;border-bottom:1px solid #787868;border-top:0.6px solid #fff;"></div>
<div style="left:167px;top:161.03px;width:282.3px;height:0.8px;background:#E4E4E4;"></div>
<span class="t" style="left:168.9px;top:153.56px;transform-origin:0 50%;color:#303030;">07.12.2009  13:10:34</span>
<span class="t" style="right:433.4px;top:153.86px;transform-origin:100% 50%;color:#303030;">24.7</span>
<div style="left:268.9px;top:153.26px;width:3.2px;height:3.3px;background:#5E1C2C;"></div>
<div style="left:352.2px;top:153.26px;width:3.2px;height:3.3px;background:#5E1C2C;"></div>
<div style="left:445.3px;top:153.26px;width:3.2px;height:3.3px;background:#5E1C2C;"></div>
<div style="left:156.1px;top:161.63px;width:10.9px;height:9.57px;background:linear-gradient(#F2F0E8,#E4E0D4);border-right:1px solid #808070;border-bottom:1px solid #787868;border-top:0.6px solid #fff;"></div>
<div style="left:167px;top:170.6px;width:282.3px;height:0.8px;background:#E4E4E4;"></div>
<span class="t" style="left:168.9px;top:163.13px;transform-origin:0 50%;color:#303030;">07.12.2009  13:10:41</span>
<span class="t" style="right:349.5px;top:163.43px;transform-origin:100% 50%;color:#303030;">24.5</span>
<div style="left:268.9px;top:162.83px;width:3.2px;height:3.3px;background:#5E1C2C;"></div>
<div style="left:352.2px;top:162.83px;width:3.2px;height:3.3px;background:#5E1C2C;"></div>
<div style="left:445.3px;top:162.83px;width:3.2px;height:3.3px;background:#5E1C2C;"></div>
<div style="left:156.1px;top:171.2px;width:10.9px;height:9.57px;background:linear-gradient(#F2F0E8,#E4E0D4);border-right:1px solid #808070;border-bottom:1px solid #787868;border-top:0.6px solid #fff;"></div>
<div style="left:167px;top:180.17px;width:282.3px;height:0.8px;background:#E4E4E4;"></div>
<span class="t" style="left:168.9px;top:172.7px;transform-origin:0 50%;color:#303030;">07.12.2009  13:10:42</span>
<span class="t" style="right:300.1px;top:173.0px;transform-origin:100% 50%;color:#303030;">23.2</span>
<span class="t" style="left:408px;top:173.0px;transform-origin:0 50%;color:#303030;">Open</span>
<div style="left:268.9px;top:172.4px;width:3.2px;height:3.3px;background:#5E1C2C;"></div>
<div style="left:352.2px;top:172.4px;width:3.2px;height:3.3px;background:#5E1C2C;"></div>
<div style="left:445.3px;top:172.4px;width:3.2px;height:3.3px;background:#5E1C2C;"></div>
<div style="left:156.1px;top:180.77px;width:10.9px;height:9.57px;background:linear-gradient(#F2F0E8,#E4E0D4);border-right:1px solid #808070;border-bottom:1px solid #787868;border-top:0.6px solid #fff;"></div>
<div style="left:167px;top:189.74px;width:282.3px;height:0.8px;background:#E4E4E4;"></div>
<span class="t" style="left:168.9px;top:182.27px;transform-origin:0 50%;color:#303030;">07.12.2009  13:10:44</span>
<span class="t" style="right:433.4px;top:182.57px;transform-origin:100% 50%;color:#303030;">24.7</span>
<div style="left:268.9px;top:181.97px;width:3.2px;height:3.3px;background:#5E1C2C;"></div>
<div style="left:352.2px;top:181.97px;width:3.2px;height:3.3px;background:#5E1C2C;"></div>
<div style="left:445.3px;top:181.97px;width:3.2px;height:3.3px;background:#5E1C2C;"></div>
<div style="left:533.4px;top:53.5px;width:8.2px;height:301.5px;background:#FAFAF6;border-left:0.6px solid #F0F0EA;"></div>
<div style="left:533.6px;top:54px;width:7.8px;height:7.8px;background:linear-gradient(90deg,#E0EAFC,#C8DAFA);border:0.6px solid #D0DCF4;border-radius:1px;"></div>
<svg style="left:534px;top:54.5px" width="7" height="7" viewBox="0 0 7 7"><path d="M1.6 4.4 L3.7 2.2 L5.8 4.4" stroke="#4D6185" stroke-width="1.1" fill="none"/></svg>
<div style="left:533.6px;top:62.5px;width:7.8px;height:18.0px;background:linear-gradient(90deg,#D4E2FC,#C4D6F8 50%,#B8CCF4);border:0.6px solid #C8D8F4;border-radius:1px;"></div>
<div style="left:153px;top:191px;width:547px;height:334px;background:#2C4096;border-radius:4px 4px 0 0;"></div>
<div style="left:153px;top:191px;width:547px;height:15px;background:linear-gradient(#3A8CFA 0,#2A78F0 1.5px,#0A5AE2 3px,#0858E0 9px,#1066F0 12px,#1A5CD0 13.5px,#0C3CB8 15px);border-radius:5px 5px 0 0;"></div>
<div style="left:153px;top:206px;width:3px;height:319px;background:linear-gradient(90deg,#7080C0,#24398E 40%,#2A3E92 70%,#5A6AB0);"></div>
<div style="left:697px;top:206px;width:1px;height:319px;background:#E4E8F8;"></div>
<div style="left:698px;top:206px;width:2px;height:319px;background:linear-gradient(90deg,#3850A8,#0A2070 50%,#0A2070);"></div>
<div style="left:153px;top:522px;width:547px;height:3px;background:linear-gradient(#4A5CB0,#0C2272 60%);"></div>
<div style="left:156px;top:206px;width:541px;height:316px;background:#EEEADB;border-left:1px solid #D8E0F4;"></div>
<svg style="left:155.5px;top:194.3px" width="10" height="10" viewBox="0 0 10 10"><rect x="1" y="0.8" width="8" height="8" fill="#E4EEFA"/><path d="M3 5.5 Q3 2 5 2 Q7 2 7 5.5 Z" fill="#1A2A3A"/><rect x="3.2" y="5.2" width="3.6" height="1.2" fill="#304050"/><path d="M6 8.8 L8.5 6" stroke="#3050A0" stroke-width="0.8"/></svg>
<span class="tb" style="left:166.5px;top:196.2px;transform-origin:0 50%;letter-spacing:0px;font-size:6.6px;">Database view</span>
<div style="left:686.8px;top:194.3px;width:10.0px;height:10.3px;background:radial-gradient(circle at 40% 35%,#E89880,#D06048 70%,#B84830);border:0.8px solid #E8C8C8;border-radius:2px;"></div>
<svg style="left:686.8px;top:194.3px" width="10" height="10" viewBox="0 0 10 10"><path d="M2.8 2.8 L7.2 7.2 M7.2 2.8 L2.8 7.2" stroke="#F8D0B8" stroke-width="1.4"/></svg>
<div style="left:156px;top:206px;width:541px;height:16.2px;background:linear-gradient(#F4F2EA,#ECE9D8);border-bottom:1px solid #C0BCAC;"></div>
<svg style="left:156px;top:206px" width="200" height="16" viewBox="0 0 200 16"><path d="M3.5 3.5 h4 l1.5 1.5 v5 h-5.5 z" fill="#7890A8" stroke="#3A4A5A" stroke-width="0.7"/><path d="M6.5 6 h4 l1.5 1.5 v4.5 h-5.5 z" fill="#56708A" stroke="#2A3A4A" stroke-width="0.7"/><path d="M16.5 3.5 h5 l1.5 1.5 v6.5 h-6.5 z" fill="#8A98A8" stroke="#4A5260" stroke-width="0.7"/><path d="M18 5.5 h3 M18 7.2 h3" stroke="#D8DCE4" stroke-width="0.6"/><path d="M20.5 9 L25.5 13 M25 8.5 L20 13" stroke="#D83030" stroke-width="0.9"/><path d="M22 4 l2.5 3" stroke="#303848" stroke-width="1"/><path d="M31 4 h4.5 v3 h-4.5z" fill="#F0F4F8" stroke="#405060" stroke-width="0.6"/><path d="M28.8 7.5 q0 -1 1 -1 h7 q1 0 1 1 v4 h-9 z" fill="#3A5868"/><path d="M29 11.8 h8.8" stroke="#203040" stroke-width="0.9"/><path d="M43.2 3.8 h5 v3 h-5z" fill="#F0F4F8" stroke="#506070" stroke-width="0.6"/><path d="M40.8 7.3 q0 -1 1 -1 h8 q1 0 1 1 v4 h-10 z" fill="#56708A"/><path d="M41 11.6 h9.8" stroke="#304050" stroke-width="0.9"/><path d="M55.5 2 v12" stroke="#D0CCBC" stroke-width="0.7"/><path d="M60 3.8 h7" stroke="#A86858" stroke-width="1.6"/><path d="M60.5 5.5 v1.2 M60.5 8.5 v1.2 M60.5 11 v1" stroke="#507060" stroke-width="0.8"/><path d="M63 7.5 q4.2 0 3.6 3.6 l-2.6 1.6" stroke="#2A3A48" stroke-width="1.3" fill="none"/><rect x="70.8" y="1.8" width="5.4" height="12.8" fill="#C8D4E0"/><path d="M72 8 h8" stroke="#101820" stroke-width="1.2"/><circle cx="72" cy="8" r="0.9" fill="#101820"/><circle cx="80" cy="8" r="0.9" fill="#101820"/><ellipse cx="88" cy="7" rx="4.6" ry="3.3" fill="#E8ECF4" stroke="#7088A8" stroke-width="0.9"/><ellipse cx="88.5" cy="7" rx="2" ry="1" fill="none" stroke="#506888" stroke-width="0.7"/><path d="M85.5 10 l-0.8 2.5 l2.5 -1.8" stroke="#6080A0" stroke-width="0.8" fill="none"/><path d="M97.5 2 v12" stroke="#D0CCBC" stroke-width="0.7"/><path d="M103 2.5 v9 l2 -2 l1.5 3 l1 -0.5 l-1.5 -3 h3 z" fill="#fff" stroke="#404850" stroke-width="0.7"/><rect x="114" y="3" width="8" height="9.5" fill="#F0F0F0" stroke="#505860" stroke-width="0.9"/><path d="M115.5 11 L121 4.5" stroke="#404850" stroke-width="1"/><path d="M116 2 v2 M119 2 v2" stroke="#505860" stroke-width="0.8"/><rect x="127" y="3" width="6" height="9" fill="#E8E6DC" stroke="#C8C4B8" stroke-width="0.8"/><path d="M132 7 h4 l-1.5 -1.5 M136 7 l-1.5 1.5" stroke="#C8C4B8" stroke-width="0.8" fill="none"/><path d="M137.5 2 v12" stroke="#D0CCBC" stroke-width="0.7"/><rect x="138.8" y="1.8" width="11" height="12.8" fill="#E4E8EC"/><circle cx="144" cy="7" r="3.3" fill="#C0D0E4" stroke="#203048" stroke-width="1.1"/><path d="M146.3 9.3 l2.5 2.5" stroke="#203048" stroke-width="1.4"/><circle cx="157" cy="8" r="3" fill="#D0DCEC" stroke="#304058" stroke-width="1"/><path d="M159 10 l2 2" stroke="#203048" stroke-width="1.3"/><path d="M151.5 6 q1 -3 4 -2.5" stroke="#304058" stroke-width="1" fill="none"/><path d="M151 4 l0.5 2.5 l2 -1" stroke="#304058" stroke-width="0.8" fill="none"/><circle cx="168" cy="7" r="2.6" fill="none" stroke="#C8C4B8" stroke-width="0.9"/><path d="M166 12 l2 -3" stroke="#C8C4B8" stroke-width="0.8"/><circle cx="180.5" cy="7" r="3.2" fill="#E8A0A0" stroke="#A02020" stroke-width="1.1"/><path d="M179 5.5 l3 3 M182 5.5 l-3 3" stroke="#A02020" stroke-width="0.8"/><path d="M182.8 9.3 l2.3 2.3" stroke="#802020" stroke-width="1.3"/><circle cx="193.5" cy="7.5" r="3.6" fill="#8098C0" stroke="#607090" stroke-width="0.6"/><ellipse cx="193.5" cy="6.5" rx="2" ry="1.8" fill="#B8C8E0"/></svg>
<div style="left:157px;top:222.3px;width:128px;height:138.9px;background:#fff;border-top:0.8px solid #A8A498;border-left:0.8px solid #B8C0D8;"></div>
<div style="left:157.8px;top:223.2px;width:126.6px;height:17.1px;background:#EEEADB;border-bottom:1px solid #9C9888;"></div>
<svg style="left:158px;top:224px" width="56" height="15" viewBox="0 0 56 15"><path d="M2.2 6 L4.5 3.2 L5.8 4.5 L3.5 7.3 Z" fill="#607080" stroke="#405060" stroke-width="0.5"/><ellipse cx="12.5" cy="4.8" rx="3.2" ry="1.7" fill="#2A5A6A"/><circle cx="12.5" cy="4.8" r="0.8" fill="#90B0C0"/><path d="M17.8 2.8 h4 v4 h-4" fill="none" stroke="#708090" stroke-width="0.7"/><path d="M18 6.9 h4" stroke="#304050" stroke-width="0.9"/><circle cx="29" cy="4.8" r="2.4" fill="#70B870"/><path d="M26.8 3.8 a2.4 2.4 0 0 1 4.4 0 z" fill="#C85040"/><path d="M29 4.8 l2.4 0 a2.4 2.4 0 0 1 -1.8 2.3z" fill="#E8C850"/><circle cx="40" cy="4.8" r="2" fill="#F0E090" stroke="#C8A840" stroke-width="0.7"/><circle cx="48.5" cy="4.8" r="2.1" fill="#A83020"/><path d="M11.2 10.2 l2.4 2.4 M13.6 10.2 l-2.4 2.4 M18.6 10.2 l2.4 2.4 M21 10.2 l-2.4 2.4 M38.8 10.2 l2.4 2.4 M41.2 10.2 l-2.4 2.4 M47.3 10.2 l2.4 2.4 M49.7 10.2 l-2.4 2.4" stroke="#D03A30" stroke-width="1.2"/></svg>
<span class="t" style="left:215px;top:228.1px;transform-origin:0 50%;color:#202020;">Title</span>
<span class="t" style="left:158.3px;top:243.0px;transform-origin:0 50%;color:#303030;">01.</span>
<svg style="left:166.5px;top:242.9px" width="7" height="7" viewBox="0 0 7 7"><path d="M0.6 6.5 V0.6 H6" stroke="#808080" stroke-width="0.8" fill="none"/><path d="M1.8 3.2 L3 4.6 L5.5 1.8" stroke="#000" stroke-width="1.1" fill="none"/></svg>
<svg style="left:174.8px;top:242.9px" width="7" height="7" viewBox="0 0 7 7"><path d="M0.6 6.5 V0.6 H6" stroke="#909090" stroke-width="0.8" fill="none"/></svg>
<div style="left:182.3px;top:245.6px;width:10.9px;height:1.9px;background:#D03838;"></div>
<svg style="left:196px;top:242.9px" width="7" height="7" viewBox="0 0 7 7"><path d="M0.6 6.5 V0.6 H6" stroke="#909090" stroke-width="0.8" fill="none"/></svg>
<svg style="left:204px;top:242.9px" width="7" height="7" viewBox="0 0 7 7"><path d="M0.6 6.5 V0.6 H6" stroke="#909090" stroke-width="0.8" fill="none"/></svg>
<div style="left:215px;top:242.4px;width:69px;height:8px;overflow:hidden;"><span class="t" style="left:1.5px;top:0;color:#303030;transform-origin:0 50%;">Sensor A Temperature (°C)</span></div>
<span class="t" style="left:158.3px;top:253.95px;transform-origin:0 50%;color:#303030;">02.</span>
<svg style="left:166.5px;top:253.85000000000002px" width="7" height="7" viewBox="0 0 7 7"><path d="M0.6 6.5 V0.6 H6" stroke="#808080" stroke-width="0.8" fill="none"/><path d="M1.8 3.2 L3 4.6 L5.5 1.8" stroke="#000" stroke-width="1.1" fill="none"/></svg>
<svg style="left:174.8px;top:253.85000000000002px" width="7" height="7" viewBox="0 0 7 7"><path d="M0.6 6.5 V0.6 H6" stroke="#909090" stroke-width="0.8" fill="none"/></svg>
<div style="left:182.3px;top:256.55px;width:10.9px;height:1.9px;background:#2E8030;"></div>
<svg style="left:196px;top:253.85000000000002px" width="7" height="7" viewBox="0 0 7 7"><path d="M0.6 6.5 V0.6 H6" stroke="#909090" stroke-width="0.8" fill="none"/></svg>
<svg style="left:204px;top:253.85000000000002px" width="7" height="7" viewBox="0 0 7 7"><path d="M0.6 6.5 V0.6 H6" stroke="#909090" stroke-width="0.8" fill="none"/></svg>
<div style="left:215px;top:253.35000000000002px;width:69px;height:8px;overflow:hidden;"><span class="t" style="left:1.5px;top:0;color:#303030;transform-origin:0 50%;">Sensor B Temperature on ch</span></div>
<span class="t" style="left:158.3px;top:264.9px;transform-origin:0 50%;color:#303030;">03.</span>
<svg style="left:166.5px;top:264.8px" width="7" height="7" viewBox="0 0 7 7"><path d="M0.6 6.5 V0.6 H6" stroke="#808080" stroke-width="0.8" fill="none"/><path d="M1.8 3.2 L3 4.6 L5.5 1.8" stroke="#000" stroke-width="1.1" fill="none"/></svg>
<svg style="left:174.8px;top:264.8px" width="7" height="7" viewBox="0 0 7 7"><path d="M0.6 6.5 V0.6 H6" stroke="#909090" stroke-width="0.8" fill="none"/></svg>
<div style="left:182.3px;top:267.5px;width:10.9px;height:1.9px;background:#1818A0;"></div>
<svg style="left:196px;top:264.8px" width="7" height="7" viewBox="0 0 7 7"><path d="M0.6 6.5 V0.6 H6" stroke="#909090" stroke-width="0.8" fill="none"/></svg>
<svg style="left:204px;top:264.8px" width="7" height="7" viewBox="0 0 7 7"><path d="M0.6 6.5 V0.6 H6" stroke="#909090" stroke-width="0.8" fill="none"/></svg>
<div style="left:215.1px;top:263.3px;width:69.3px;height:10.3px;background:#7C96D8;"></div>
<span class="t" style="left:216.5px;top:264.9px;transform-origin:0 50%;color:#E8ECF8;">Sensor C Temperature (°C)</span>
<span class="t" style="left:158.3px;top:275.85px;transform-origin:0 50%;color:#303030;">04.</span>
<svg style="left:166.5px;top:275.75px" width="7" height="7" viewBox="0 0 7 7"><path d="M0.6 6.5 V0.6 H6" stroke="#808080" stroke-width="0.8" fill="none"/><path d="M1.8 3.2 L3 4.6 L5.5 1.8" stroke="#000" stroke-width="1.1" fill="none"/></svg>
<div style="left:182.3px;top:278.45px;width:10.9px;height:1.9px;background:#F0C0A0;"></div>
<svg style="left:196px;top:275.75px" width="7" height="7" viewBox="0 0 7 7"><path d="M0.6 6.5 V0.6 H6" stroke="#909090" stroke-width="0.8" fill="none"/></svg>
<svg style="left:204px;top:275.75px" width="7" height="7" viewBox="0 0 7 7"><path d="M0.6 6.5 V0.6 H6" stroke="#909090" stroke-width="0.8" fill="none"/></svg>
<div style="left:215px;top:275.25px;width:69px;height:8px;overflow:hidden;"><span class="t" style="left:1.5px;top:0;color:#303030;transform-origin:0 50%;">Sensor C Binary input 3</span></div>
<div style="left:284.8px;top:222.3px;width:1.0px;height:289.7px;background:#C8C4B8;"></div>
<div style="left:285.8px;top:222.3px;width:1.8px;height:289.7px;background:#EEEADB;"></div>
<div style="left:157px;top:361.2px;width:128px;height:150.8px;background:#fff;border-left:0.8px solid #B8C0D8;border-top:0.8px solid #E0DCD0;"></div>
<div style="left:157.5px;top:361.2px;width:127.0px;height:1.2px;background:#ECEAE2;"></div>
<div style="left:158px;top:362.5px;width:126px;height:10.8px;background:#fff;border:0.8px solid #E4E2DA;border-bottom-color:#D0CCC4;"></div>
<div style="left:275.5px;top:363.5px;width:7.5px;height:9.0px;background:#F8F8F4;border-left:0.6px solid #F0EEE8;"></div>
<span class="t" style="left:161px;top:364.6px;transform-origin:0 50%;color:#303030;">Series</span>
<svg style="left:276px;top:365px" width="6" height="6" viewBox="0 0 6 6"><path d="M0.8 1.8 L5.2 1.8 L3 4.2 Z" fill="#000"/></svg>
<span class="t" style="left:158.3px;top:374.1px;transform-origin:0 50%;color:#3848A0;">Property</span>
<span class="t" style="left:199.3px;top:374.1px;transform-origin:0 50%;color:#3848A0;">Value</span>
<span class="t" style="left:158.3px;top:383.8px;transform-origin:0 50%;color:#303030;">Line</span>
<div style="left:199px;top:391.6px;width:85px;height:0.6px;background:#E8E8E8;"></div>
<div style="left:199.4px;top:384.2px;width:6.1px;height:6.6px;background:#E8E6DE;border:0.6px solid #D0CCC0;"></div>
<div style="left:201.5px;top:388.8px;width:2.0px;height:0.5px;background:#A0A0A0;"></div>
<span class="t" style="left:158.3px;top:393.42px;transform-origin:0 50%;color:#303030;">Color</span>
<div style="left:199px;top:401.22px;width:85px;height:0.6px;background:#E8E8E8;"></div>
<div style="left:199.6px;top:393.42px;width:6.7px;height:7.0px;background:#0000E0;"></div>
<span class="t" style="left:208px;top:393.42px;transform-origin:0 50%;color:#303030;">Blue</span>
<span class="t" style="left:158.3px;top:403.04px;transform-origin:0 50%;color:#303030;">Show at Legend</span>
<div style="left:199px;top:410.84px;width:85px;height:0.6px;background:#E8E8E8;"></div>
<svg style="left:199px;top:402.94px" width="7" height="7" viewBox="0 0 7 7"><path d="M0.6 6.5 V0.6 H6" stroke="#808080" stroke-width="0.8" fill="none"/><path d="M1.8 3.2 L3 4.6 L5.5 1.8" stroke="#000" stroke-width="1.1" fill="none"/></svg>
<span class="t" style="left:208px;top:403.04px;transform-origin:0 50%;color:#303030;">Yes</span>
<span class="t" style="left:158.3px;top:412.66px;transform-origin:0 50%;color:#303030;">Title</span>
<div style="left:199px;top:420.46px;width:85px;height:0.6px;background:#E8E8E8;"></div>
<div style="left:199.4px;top:413.06px;width:6.1px;height:6.6px;background:#E8E6DE;border:0.6px solid #D0CCC0;"></div>
<div style="left:201.5px;top:417.66px;width:2.0px;height:0.5px;background:#A0A0A0;"></div>
<span class="t" style="left:158.3px;top:422.28px;transform-origin:0 50%;color:#303030;">Show Marks</span>
<div style="left:199px;top:430.08px;width:85px;height:0.6px;background:#E8E8E8;"></div>
<svg style="left:199px;top:422.18px" width="7" height="7" viewBox="0 0 7 7"><path d="M0.6 6.5 V0.6 H6" stroke="#808080" stroke-width="0.8" fill="none"/></svg>
<span class="t" style="left:208px;top:422.28px;transform-origin:0 50%;color:#303030;">No</span>
<span class="t" style="left:158.3px;top:431.9px;transform-origin:0 50%;color:#303030;">Mark</span>
<div style="left:199px;top:439.7px;width:85px;height:0.6px;background:#E8E8E8;"></div>
<div style="left:287.6px;top:222.3px;width:392.8px;height:282.0px;background:#fff;"></div>
<span class="t" style="left:474.3px;top:234.6px;transform-origin:0 50%;color:#202020;">Database view</span>
<span class="t" style="right:377.4px;top:245.8px;transform-origin:100% 50%;color:#303030;">31,5</span>
<span class="t" style="right:377.4px;top:257.45px;transform-origin:100% 50%;color:#303030;">31</span>
<span class="t" style="right:377.4px;top:269.1px;transform-origin:100% 50%;color:#303030;">30,5</span>
<span class="t" style="right:377.4px;top:280.75px;transform-origin:100% 50%;color:#303030;">30</span>
<span class="t" style="right:377.4px;top:292.4px;transform-origin:100% 50%;color:#303030;">29,5</span>
<span class="t" style="right:377.4px;top:304.05px;transform-origin:100% 50%;color:#303030;">29</span>
<span class="t" style="right:377.4px;top:315.7px;transform-origin:100% 50%;color:#303030;">28,5</span>
<span class="t" style="right:377.4px;top:327.35px;transform-origin:100% 50%;color:#303030;">28</span>
<span class="t" style="right:377.4px;top:339.0px;transform-origin:100% 50%;color:#303030;">27,5</span>
<span class="t" style="right:377.4px;top:350.65px;transform-origin:100% 50%;color:#303030;">27</span>
<span class="t" style="right:377.4px;top:362.3px;transform-origin:100% 50%;color:#303030;">26,5</span>
<span class="t" style="right:377.4px;top:373.95px;transform-origin:100% 50%;color:#303030;">26</span>
<span class="t" style="right:377.4px;top:385.6px;transform-origin:100% 50%;color:#303030;">25,5</span>
<span class="t" style="right:377.4px;top:397.25px;transform-origin:100% 50%;color:#303030;">25</span>
<span class="t" style="right:377.4px;top:408.9px;transform-origin:100% 50%;color:#303030;">24,5</span>
<span class="t" style="right:377.4px;top:420.55px;transform-origin:100% 50%;color:#303030;">24</span>
<span class="t" style="right:377.4px;top:432.2px;transform-origin:100% 50%;color:#303030;">23,5</span>
<span class="t" style="right:377.4px;top:443.85px;transform-origin:100% 50%;color:#303030;">23</span>
<span class="t" style="right:377.4px;top:455.5px;transform-origin:100% 50%;color:#303030;">22,5</span>
<span class="t" style="left:245.5px;width:200px;text-align:center;top:486.7px;transform-origin:50% 50%;color:#383838;">13:15:00</span>
<span class="t" style="left:245.5px;width:200px;text-align:center;top:493.9px;transform-origin:50% 50%;color:#383838;">07.12.2009</span>
<span class="t" style="left:316.7px;width:200px;text-align:center;top:486.7px;transform-origin:50% 50%;color:#383838;">13:20:00</span>
<span class="t" style="left:316.7px;width:200px;text-align:center;top:493.9px;transform-origin:50% 50%;color:#383838;">07.12.2009</span>
<span class="t" style="left:387.9px;width:200px;text-align:center;top:486.7px;transform-origin:50% 50%;color:#383838;">13:25:00</span>
<span class="t" style="left:387.9px;width:200px;text-align:center;top:493.9px;transform-origin:50% 50%;color:#383838;">07.12.2009</span>
<span class="t" style="left:459.1px;width:200px;text-align:center;top:486.7px;transform-origin:50% 50%;color:#383838;">13:30:00</span>
<span class="t" style="left:459.1px;width:200px;text-align:center;top:493.9px;transform-origin:50% 50%;color:#383838;">07.12.2009</span>
<span class="t" style="left:530.3px;width:200px;text-align:center;top:486.7px;transform-origin:50% 50%;color:#383838;">13:35:00</span>
<span class="t" style="left:530.3px;width:200px;text-align:center;top:493.9px;transform-origin:50% 50%;color:#383838;">07.12.2009</span>
<span class="t" style="right:375.7px;top:467.9px;transform-origin:100% 50%;color:#303030;">[4] Open</span>
<span class="t" style="right:375.7px;top:473.9px;transform-origin:100% 50%;color:#303030;">[4] Closed</span>
<svg style="left:0;top:0" width="700" height="525" viewBox="0 0 700 525"><line x1="327.6" y1="249.2" x2="668.5" y2="249.2" stroke="#A0A0A0" stroke-width="0.9" stroke-dasharray="1.1 2.25"/><line x1="327.6" y1="260.84999999999997" x2="668.5" y2="260.84999999999997" stroke="#A0A0A0" stroke-width="0.9" stroke-dasharray="1.1 2.25"/><line x1="327.6" y1="272.5" x2="668.5" y2="272.5" stroke="#A0A0A0" stroke-width="0.9" stroke-dasharray="1.1 2.25"/><line x1="327.6" y1="284.15" x2="668.5" y2="284.15" stroke="#A0A0A0" stroke-width="0.9" stroke-dasharray="1.1 2.25"/><line x1="327.6" y1="295.8" x2="668.5" y2="295.8" stroke="#A0A0A0" stroke-width="0.9" stroke-dasharray="1.1 2.25"/><line x1="327.6" y1="307.45" x2="668.5" y2="307.45" stroke="#A0A0A0" stroke-width="0.9" stroke-dasharray="1.1 2.25"/><line x1="327.6" y1="319.1" x2="668.5" y2="319.1" stroke="#A0A0A0" stroke-width="0.9" stroke-dasharray="1.1 2.25"/><line x1="327.6" y1="330.75" x2="668.5" y2="330.75" stroke="#A0A0A0" stroke-width="0.9" stroke-dasharray="1.1 2.25"/><line x1="327.6" y1="342.4" x2="668.5" y2="342.4" stroke="#A0A0A0" stroke-width="0.9" stroke-dasharray="1.1 2.25"/><line x1="327.6" y1="354.05" x2="668.5" y2="354.05" stroke="#A0A0A0" stroke-width="0.9" stroke-dasharray="1.1 2.25"/><line x1="327.6" y1="365.7" x2="668.5" y2="365.7" stroke="#A0A0A0" stroke-width="0.9" stroke-dasharray="1.1 2.25"/><line x1="327.6" y1="377.35" x2="668.5" y2="377.35" stroke="#A0A0A0" stroke-width="0.9" stroke-dasharray="1.1 2.25"/><line x1="327.6" y1="389.0" x2="668.5" y2="389.0" stroke="#A0A0A0" stroke-width="0.9" stroke-dasharray="1.1 2.25"/><line x1="327.6" y1="400.65" x2="668.5" y2="400.65" stroke="#A0A0A0" stroke-width="0.9" stroke-dasharray="1.1 2.25"/><line x1="327.6" y1="412.29999999999995" x2="668.5" y2="412.29999999999995" stroke="#A0A0A0" stroke-width="0.9" stroke-dasharray="1.1 2.25"/><line x1="327.6" y1="423.95" x2="668.5" y2="423.95" stroke="#A0A0A0" stroke-width="0.9" stroke-dasharray="1.1 2.25"/><line x1="327.6" y1="435.6" x2="668.5" y2="435.6" stroke="#A0A0A0" stroke-width="0.9" stroke-dasharray="1.1 2.25"/><line x1="327.6" y1="447.25" x2="668.5" y2="447.25" stroke="#A0A0A0" stroke-width="0.9" stroke-dasharray="1.1 2.25"/><line x1="327.6" y1="458.9" x2="668.5" y2="458.9" stroke="#A0A0A0" stroke-width="0.9" stroke-dasharray="1.1 2.25"/><line x1="345.5" y1="247" x2="345.5" y2="486" stroke="#A0A0A0" stroke-width="0.9" stroke-dasharray="1.1 2.25"/><line x1="416.7" y1="247" x2="416.7" y2="486" stroke="#A0A0A0" stroke-width="0.9" stroke-dasharray="1.1 2.25"/><line x1="487.9" y1="247" x2="487.9" y2="486" stroke="#A0A0A0" stroke-width="0.9" stroke-dasharray="1.1 2.25"/><line x1="559.1" y1="247" x2="559.1" y2="486" stroke="#A0A0A0" stroke-width="0.9" stroke-dasharray="1.1 2.25"/><line x1="630.3" y1="247" x2="630.3" y2="486" stroke="#A0A0A0" stroke-width="0.9" stroke-dasharray="1.1 2.25"/><polyline points="326.7,283.8 329.5,279.6 333.3,282.9 338.1,291.4 346.7,316.2 348.6,316.2 351.7,300.0 354.6,286.2 357.4,271.9 359.3,267.6 360.8,265.7 363.1,267.6 367.0,264.3 369.3,260.0 371.7,258.6 373.6,259.5 375.5,262.4 378.4,266.2 381.2,273.8 385.4,284.0 389.9,293.4 392.6,298.7 395.2,306.3 397.9,311.3 400.6,316.3 402.9,314.0 405.9,305.6 408.6,298.7 410.5,298.1 413.5,301.0 415.1,304.1 418.1,314.0 421.2,325.0 428.1,354.0 434.7,376.0 441.3,395.6 447.8,411.0 452.2,421.9 453.3,426.3 455.5,426.3 457.7,417.5 460.0,391.0 462.9,369.3 465.0,363.6 467.9,361.4 471.4,365.0 477.1,373.6 482.9,383.6 487.1,393.6 492.9,402.1 498.6,409.3 502.9,411.4 510.0,417.1 515.7,421.4 522.6,421.4 528.3,426.2 536.0,426.2 539.8,428.7 556.9,428.7 561.7,431.0 565.5,428.7 568.3,431.0 588.3,431.0 591.2,429.5 595.1,428.2 599.0,426.3 602.9,425.0 608.0,419.2 611.9,417.9 617.0,414.7 627.3,414.1 629.6,412.1 632.4,414.4 645.3,414.4 650.4,410.6 654.3,409.6 657.5,403.1 668.4,403.1" fill="none" stroke="#287030" stroke-width="1.4" stroke-linejoin="round"/><polyline points="326.7,338.0 333.3,328.6 339.0,328.6 341.0,330.5 346.7,330.5 350.5,327.6 356.2,303.8 359.0,322.9 365.7,289.5 369.9,306.7 376.2,298.1 380.0,298.7 383.8,300.6 387.6,304.4 391.4,307.5 396.8,310.9 401.3,294.1 404.4,304.1 406.3,306.3 410.5,303.3 413.5,303.1 418.1,307.1 422.7,310.9 425.7,314.7 428.8,320.1 435.8,330.0 445.6,343.1 454.4,351.9 463.1,362.8 468.6,371.0 472.9,373.6 478.6,377.1 482.9,381.4 488.6,384.3 492.9,387.9 498.6,390.7 504.3,393.6 510.0,396.4 515.7,397.9 526.4,403.3 537.9,406.2 541.7,407.7 551.2,410.0 558.8,411.5 568.3,413.8 572.1,415.3 579.8,415.7 583.6,417.2 598.8,417.4 601.7,419.2 622.1,419.0 628.6,419.2 631.1,421.1 644.0,421.4 668.4,421.4" fill="none" stroke="#C83434" stroke-width="1.4" stroke-linejoin="round"/><polyline points="326.7,344.8 332.4,340.0 337.1,342.9 345.7,353.9 348.6,354.3 355.2,333.3 358.1,335.2 367.6,321.9 375.2,326.7 388.6,348.6 400.0,363.4 408.6,356.2 413.3,357.1 415.0,358.6 421.6,369.4 428.1,382.5 436.9,395.6 443.4,404.4 450.0,415.3 458.8,424.1 467.5,432.8 475.0,437.2 481.0,440.1 559.8,439.8 562.6,437.6 595.0,437.6 598.8,435.5 604.5,435.1 610.6,428.6 613.1,427.8 624.7,417.3 631.1,417.3 635.0,419.2 638.8,419.2 641.4,421.1 645.3,424.3 660.7,424.3 663.3,426.3 668.4,426.3" fill="none" stroke="#1C1C88" stroke-width="1.5" stroke-linejoin="round"/><polyline points="327.0,471.5 379.2,471.5 379.2,477.4 541.0,477.4 541.0,471.5 600.4,471.5 600.4,477.4 645.4,477.4 645.4,471.5 668.4,471.5" fill="none" stroke="#E8AC80" stroke-width="1.3"/><line x1="326.6" y1="245" x2="326.6" y2="466.3" stroke="#000" stroke-width="1.1"/><line x1="323.6" y1="249.2" x2="326.6" y2="249.2" stroke="#B0B0B0" stroke-width="0.7"/><line x1="323.6" y1="260.84999999999997" x2="326.6" y2="260.84999999999997" stroke="#B0B0B0" stroke-width="0.7"/><line x1="323.6" y1="272.5" x2="326.6" y2="272.5" stroke="#B0B0B0" stroke-width="0.7"/><line x1="323.6" y1="284.15" x2="326.6" y2="284.15" stroke="#B0B0B0" stroke-width="0.7"/><line x1="323.6" y1="295.8" x2="326.6" y2="295.8" stroke="#B0B0B0" stroke-width="0.7"/><line x1="323.6" y1="307.45" x2="326.6" y2="307.45" stroke="#B0B0B0" stroke-width="0.7"/><line x1="323.6" y1="319.1" x2="326.6" y2="319.1" stroke="#B0B0B0" stroke-width="0.7"/><line x1="323.6" y1="330.75" x2="326.6" y2="330.75" stroke="#B0B0B0" stroke-width="0.7"/><line x1="323.6" y1="342.4" x2="326.6" y2="342.4" stroke="#B0B0B0" stroke-width="0.7"/><line x1="323.6" y1="354.05" x2="326.6" y2="354.05" stroke="#B0B0B0" stroke-width="0.7"/><line x1="323.6" y1="365.7" x2="326.6" y2="365.7" stroke="#B0B0B0" stroke-width="0.7"/><line x1="323.6" y1="377.35" x2="326.6" y2="377.35" stroke="#B0B0B0" stroke-width="0.7"/><line x1="323.6" y1="389.0" x2="326.6" y2="389.0" stroke="#B0B0B0" stroke-width="0.7"/><line x1="323.6" y1="400.65" x2="326.6" y2="400.65" stroke="#B0B0B0" stroke-width="0.7"/><line x1="323.6" y1="412.29999999999995" x2="326.6" y2="412.29999999999995" stroke="#B0B0B0" stroke-width="0.7"/><line x1="323.6" y1="423.95" x2="326.6" y2="423.95" stroke="#B0B0B0" stroke-width="0.7"/><line x1="323.6" y1="435.6" x2="326.6" y2="435.6" stroke="#B0B0B0" stroke-width="0.7"/><line x1="323.6" y1="447.25" x2="326.6" y2="447.25" stroke="#B0B0B0" stroke-width="0.7"/><line x1="323.6" y1="458.9" x2="326.6" y2="458.9" stroke="#B0B0B0" stroke-width="0.7"/><line x1="326.6" y1="466.3" x2="668.5" y2="466.3" stroke="#101010" stroke-width="1.1"/><line x1="326.6" y1="470.6" x2="326.6" y2="478.4" stroke="#000" stroke-width="1.1"/><line x1="326.6" y1="483.1" x2="668.5" y2="483.1" stroke="#404040" stroke-width="1.5"/></svg>
<div style="left:680.2px;top:222.3px;width:0.8px;height:282.0px;background:#808080;"></div>
<div style="left:681px;top:222.3px;width:8.6px;height:282.0px;background:#F0EEE6;border-right:0.8px solid #B8B4A8;"></div>
<div style="left:681px;top:222.3px;width:8.6px;height:8.1px;background:#EEEADB;border:0.7px solid #fff;border-right-color:#808080;border-bottom-color:#808080;"></div>
<svg style="left:681px;top:223px" width="9" height="8" viewBox="0 0 9 8"><path d="M2.6 4.6 L6.2 4.6 L4.4 2.6 Z" fill="#000"/></svg>
<div style="left:681px;top:230.4px;width:8.4px;height:133.0px;background:#EEEADB;border:0.8px solid #fff;border-right:1px solid #8C8C84;border-bottom:1px solid #8C8C84;"></div>
<div style="left:681px;top:496.8px;width:8.6px;height:7.5px;background:#EEEADB;border:0.7px solid #fff;border-right-color:#808080;border-bottom-color:#808080;"></div>
<svg style="left:681px;top:497px" width="9" height="8" viewBox="0 0 9 8"><path d="M2.6 2.8 L6.2 2.8 L4.4 4.8 Z" fill="#000"/></svg>
<div style="left:689.6px;top:222.3px;width:7.4px;height:289.7px;background:#EEEADB;"></div>
<div style="left:287.6px;top:504.3px;width:393.4px;height:9.3px;background:#F0EEE6;border-top:0.8px solid #C8C4B8;"></div>
<div style="left:287.9px;top:504.8px;width:8.5px;height:8.6px;background:#EEEADB;border:0.7px solid #fff;border-right-color:#808080;border-bottom-color:#808080;"></div>
<svg style="left:288px;top:505px" width="8" height="8" viewBox="0 0 8 8"><path d="M5 2.2 L5 5.8 L3 4 Z" fill="#000"/></svg>
<div style="left:296.4px;top:504.8px;width:225.1px;height:8.6px;background:#EEEADB;border:0.7px solid #fff;border-right-color:#808080;border-bottom-color:#808080;"></div>
<div style="left:672.5px;top:504.8px;width:8.5px;height:8.6px;background:#EEEADB;border:0.7px solid #fff;border-right-color:#808080;border-bottom-color:#808080;"></div>
<svg style="left:673px;top:505px" width="8" height="8" viewBox="0 0 8 8"><path d="M3 2.2 L3 5.8 L5 4 Z" fill="#000"/></svg>
<div style="left:681px;top:504.3px;width:8.6px;height:9.3px;background:#EEEADB;"></div>
<div style="left:156px;top:512px;width:541px;height:10px;background:#EEEADB;border-top:1px solid #D8D4C8;"></div>
<div style="left:157px;top:512px;width:128px;height:1.6px;background:#E8E6DC;"></div>
<div style="left:307px;top:515.7px;width:7.3px;height:6.7px;background:#0A0AD8;"></div>
<span class="t" style="left:317px;top:515.0px;transform-origin:0 50%;color:#202020;transform:scaleX(0.77);">Drag mouse to right-bottom to zoom. To left-top to unzoom.</span>
</body></html>
